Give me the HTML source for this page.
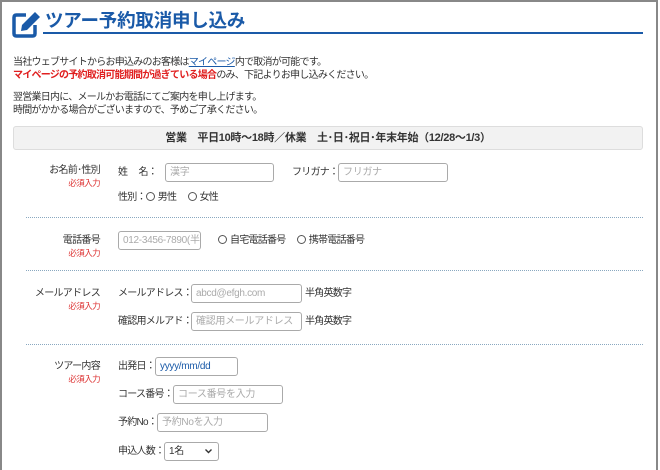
<!DOCTYPE html><html><head><meta charset="utf-8"><style>
*{margin:0;padding:0;box-sizing:border-box}
body{width:660px;height:470px;overflow:hidden;background:#fff;font-family:"Liberation Sans","Noto Sans CJK JP",sans-serif;color:#333;position:relative}
.frame{position:absolute;left:0;top:0;width:658px;height:470px;border:2px solid #888;border-bottom:none}
.a{position:absolute;white-space:nowrap;font-size:10px;line-height:13px;letter-spacing:-0.75px}
.t{position:absolute;left:45px;top:9px;font-size:18.5px;font-weight:bold;color:#1a5aa8;line-height:24px;letter-spacing:-0.2px}
.ul{position:absolute;left:43px;top:32px;width:600px;height:2px;background:#1a5aa8}
.bar{position:absolute;left:13px;top:126px;width:630px;height:24px;background:#f2f2f2;border:1px solid #ddd;border-radius:3px;font-size:11px;font-weight:bold;text-align:center;line-height:22px;letter-spacing:-0.3px}
.lab{position:absolute;right:560px;text-align:right;font-size:10px;line-height:13px;white-space:nowrap;letter-spacing:-0.7px}
.req{color:#d33;font-size:8.5px;display:block;letter-spacing:-0.6px}
.in{position:absolute;height:19px;border:1px solid #aaa;border-radius:3px;font-size:10px;color:#aaa;padding-left:4px;line-height:17px;white-space:nowrap;overflow:hidden;background:#fff;letter-spacing:-0.3px}
.hr{position:absolute;left:26px;width:617px;border-top:1px dotted #8aa8c0}
.r{display:inline-block;width:9px;height:9px;border:1px solid #555;border-radius:50%;vertical-align:-1px;margin-right:3px}
</style></head><body>
<div class="frame"></div>
<svg style="position:absolute;left:12px;top:10px" width="30" height="28" viewBox="0 0 30 28"><path d="M14 5H4.5Q2 5 2 7.5V23.5Q2 26 4.5 26H20.5Q23 26 23 23.5V15" fill="none" stroke="#1a5aa8" stroke-width="3.5"/><path d="M23 2L28 7L15 20L9 21L10 15Z" fill="#1a5aa8"/></svg>
<div class="t">ツアー予約取消申し込み</div><div class="ul"></div>
<div class="a" style="left:13px;top:56px">当社ウェブサイトからお申込みのお客様は<span style="color:#1a5aa8;text-decoration:underline">マイページ</span>内で取消が可能です。</div>
<div class="a" style="left:13px;top:69px"><b style="color:#e02020">マイページの予約取消可能期間が過ぎている場合</b>のみ、下記よりお申し込みください。</div>
<div class="a" style="left:13px;top:91px">翌営業日内に、メールかお電話にてご案内を申し上げます。</div>
<div class="a" style="left:13px;top:104px">時間がかかる場合がございますので、予めご了承ください。</div>
<div class="bar">営業　平日10時～18時／休業　土･日･祝日･年末年始（12/28～1/3）</div>

<div class="lab" style="top:164px">お名前･性別<span class="req">必須入力</span></div>
<div class="a" style="left:118px;top:166px">姓　 名：</div><div class="in" style="left:165px;top:163px;width:109px">漢字</div>
<div class="a" style="left:292px;top:166px">フリガナ：</div><div class="in" style="left:338px;top:163px;width:110px">フリガナ</div>
<div class="a" style="left:118px;top:191px">性別：<span class="r"></span>男性　 <span class="r"></span>女性</div>
<div class="hr" style="top:217px"></div>

<div class="lab" style="top:234px">電話番号<span class="req">必須入力</span></div>
<div class="in" style="left:118px;top:231px;width:83px">012-3456-7890(半角</div>
<div class="a" style="left:218px;top:234px"><span class="r"></span>自宅電話番号　 <span class="r"></span>携帯電話番号</div>
<div class="hr" style="top:270px"></div>

<div class="lab" style="top:287px">メールアドレス<span class="req">必須入力</span></div>
<div class="a" style="left:118px;top:287px">メールアドレス：</div><div class="in" style="left:191px;top:284px;width:111px">abcd@efgh.com</div><div class="a" style="left:305px;top:287px">半角英数字</div>
<div class="a" style="left:118px;top:315px">確認用メルアド：</div><div class="in" style="left:191px;top:312px;width:111px">確認用メールアドレス</div><div class="a" style="left:305px;top:315px">半角英数字</div>
<div class="hr" style="top:344px"></div>

<div class="lab" style="top:360px">ツアー内容<span class="req">必須入力</span></div>
<div class="a" style="left:118px;top:360px">出発日：</div><div class="in" style="left:155px;top:357px;width:83px;color:#1a5aa8">yyyy/mm/dd</div>
<div class="a" style="left:118px;top:388px">コース番号：</div><div class="in" style="left:173px;top:385px;width:110px">コース番号を入力</div>
<div class="a" style="left:118px;top:416px">予約No：</div><div class="in" style="left:157px;top:413px;width:111px">予約Noを入力</div>
<div class="a" style="left:118px;top:445px">申込人数：</div><div class="in" style="left:164px;top:442px;width:55px;color:#333">1名<svg style="position:absolute;right:6px;top:6px" width="7" height="5" viewBox="0 0 7 5"><path d="M0.5 0.5L3.5 3.5L6.5 0.5" fill="none" stroke="#333" stroke-width="1.4"/></svg></div>
</body></html>
